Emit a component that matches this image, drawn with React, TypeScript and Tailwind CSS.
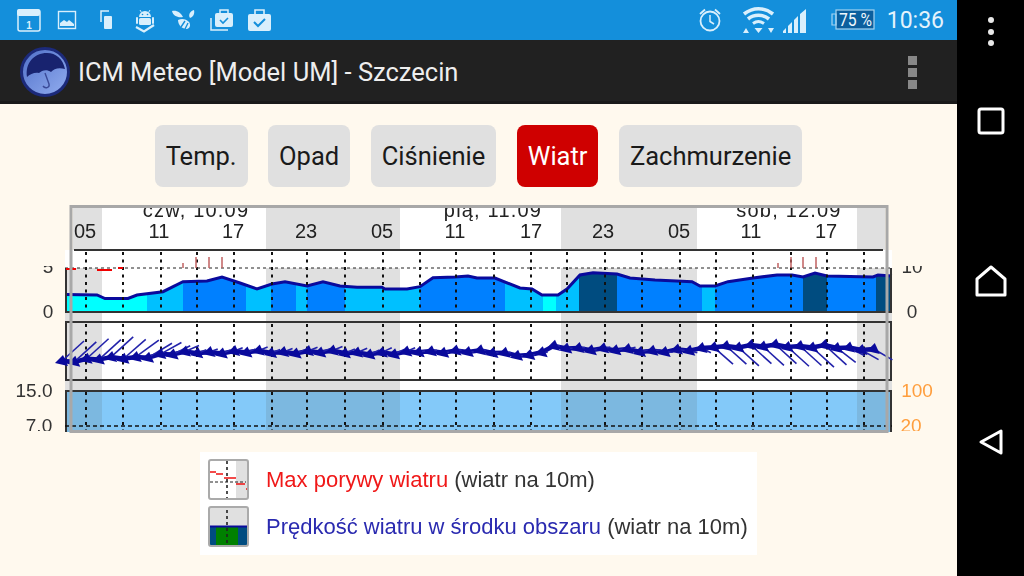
import React from 'react';

const tabs = [
  { label: 'Temp.' },
  { label: 'Opad' },
  { label: 'Ciśnienie' },
  { label: 'Wiatr', active: true },
  { label: 'Zachmurzenie' },
];

// chart values below are in page pixels (the svg viewBox starts at y=205)
const nightBands = [
  [65, 102],
  [266, 400],
  [561, 697],
  [857, 892],
];
const gridX = [86, 123, 161, 197, 234, 272, 307, 345, 383, 420, 456, 494, 531, 567, 605, 642, 680, 716, 753, 791, 827, 864];
const hours = [
  ['05', 85], ['11', 159], ['17', 233], ['23', 306], ['05', 382], ['11', 455],
  ['17', 531], ['23', 603], ['05', 679], ['11', 751], ['17', 826],
] as const;
const days = [
  ['czw, 10.09', 196],
  ['pią, 11.09', 493],
  ['sob, 12.09', 789],
] as const;

const curve = [
  [65, 294.5], [97, 295], [105, 298.5], [128, 298.5], [137, 295], [163, 291.7], [183, 281.7], [207, 281],
  [222, 277], [240, 283], [257, 289], [272, 284], [285, 281.7], [307, 286], [323, 281.7], [340, 286],
  [357, 287.3], [382, 287.3], [385, 289], [407, 289], [420, 286.7], [433, 277.7], [455, 277], [468, 276],
  [477, 278], [495, 278], [520, 288], [532, 289], [542, 295], [558, 295], [567, 289], [580, 275],
  [593, 272.7], [617, 274], [630, 278], [655, 280], [692, 281.7], [700, 286], [715, 286], [728, 281.7],
  [753, 278], [777, 275], [792, 275], [803, 277], [815, 273], [827, 276], [873, 277], [878, 275], [892, 276],
];
const curveLine = curve.map((p) => p.join(',')).join(' ');

const CYAN = '#00ffff';
const LIGHT = '#00c0ff';
const BLUE = '#0080ff';
const DARK = '#004c80';
const speedBands: [number, number, string][] = [
  [65, 147, CYAN], [147, 183, LIGHT], [183, 246, BLUE], [246, 271, LIGHT], [271, 296, BLUE], [296, 307, LIGHT],
  [307, 345, BLUE], [345, 420, LIGHT], [420, 505, BLUE], [505, 543, LIGHT], [543, 556, CYAN], [556, 579, LIGHT],
  [579, 617, DARK], [617, 702, BLUE], [702, 715, LIGHT], [715, 803, BLUE], [803, 827, DARK], [827, 876, BLUE],
  [876, 892, DARK],
];

const lerp = (table: number[][], x: number, col: number) => {
  for (let i = 1; i < table.length; i++) {
    if (x <= table[i][0]) {
      const t = (x - table[i - 1][0]) / (table[i][0] - table[i - 1][0]);
      return table[i - 1][col] + (table[i][col] - table[i - 1][col]) * t;
    }
  }
  return table[table.length - 1][col];
};

// x, y of the arrow head, then the tail offset
const windTable = [
  [62, 361, 22, -20],
  [120, 358, 22, -20],
  [150, 356, 24, -14],
  [185, 353, 14, -6],
  [200, 352, 8, -3],
  [340, 352, 10, -4],
  [400, 354, 10, -5],
  [420, 351, 6, -1],
  [500, 352, 6, 0],
  [530, 356, 6, 0],
  [555, 347, 6, 0],
  [640, 351, 8, -2],
  [700, 350, 8, 3],
  [715, 346, 20, 18],
  [830, 346, 22, 20],
  [845, 349, 15, 8],
  [885, 349, 20, 12],
];
const windArrows = Array.from({ length: 67 }, (_, i) => {
  const x = 62 + i * 12.3;
  const wob = [0, 1.5, -1, 0.5, -1.5, 1][i % 6];
  return {
    x,
    y: lerp(windTable, x, 1) + wob,
    dx: lerp(windTable, x, 2),
    dy: lerp(windTable, x, 3),
  };
});

const gustTicks = [183, 196, 209, 222, 778, 791, 803, 816];

function Chart() {
  return (
    <svg viewBox="0 205 957 228" width={957} height={228} className="block blur-[0.4px]">
      <defs>
        <clipPath id="under-curve">
          <polygon points={`65,311 ${curveLine} 892,311`} />
        </clipPath>
        <clipPath id="day-labels">
          <rect x={70} y={207} width={818} height={40} />
        </clipPath>
      </defs>

      {/* page background of the plot */}
      <rect x={73} y={208} width={812} height={42} fill="#fff" />
      <rect x={65} y={250} width={827} height={182} fill="#fff" />
      {nightBands.map(([a, b]) => (
        <g key={a} fill="#e0e0e0">
          <rect x={Math.max(a, 73)} y={208} width={Math.min(b, 885) - Math.max(a, 73)} height={42} />
          <rect x={a} y={268} width={b - a} height={122} />
        </g>
      ))}

      {/* speed area */}
      <g clipPath="url(#under-curve)">
        {speedBands.map(([a, b, c]) => (
          <rect key={a} x={a} y={268} width={b - a} height={44} fill={c} />
        ))}
      </g>
      <polyline points={curveLine} fill="none" stroke="#0a0a9c" strokeWidth={3} />

      {/* cloud strip */}
      <rect x={65} y={390} width={827} height={42} fill="#83c9f9" />
      {nightBands.map(([a, b]) => (
        <rect key={a} x={a} y={390} width={b - a} height={42} fill="#7cb8e0" />
      ))}

      {/* panel frames */}
      <g fill="none" stroke="#333" strokeWidth={2}>
        <path d="M74 250H883" />
        <path d="M66 268V312H891V268" />
        <rect x={66} y={322} width={825} height={58} />
        <path d="M66 432V391H891V432" />
      </g>

      {/* grid */}
      <g stroke="#111" strokeWidth={2} strokeDasharray="3 4.500">
        {gridX.map((x) => (
          <g key={x}>
            <path d={`M${x} 252V312`} />
            <path d={`M${x} 324V380`} />
            <path d={`M${x} 392V432`} />
          </g>
        ))}
      </g>
      <path d="M65 268H892" stroke="#222" strokeWidth={1} strokeDasharray="3 3" />
      <path d="M65 426H892" stroke="#111" strokeWidth={1.5} strokeDasharray="4 3" />

      {/* gusts */}
      <path d="M66 269H76M97 270H112M118 268H123" stroke="#f00000" strokeWidth={2} fill="none" />
      <g stroke="#c06060" strokeWidth={1.5} fill="none">
        {gustTicks.map((x, i) => (
          <path key={x} d={`M${x} 268V${i % 4 === 0 ? 263 : 257}`} />
        ))}
      </g>
      <path d="M232 431H300M340 431H885" stroke="#d06060" strokeWidth={1} strokeDasharray="6 6" />

      {/* wind */}
      <polyline
        points={windArrows.map((a) => `${a.x},${a.y}`).join(' ')}
        fill="none"
        stroke="#0a0a9c"
        strokeWidth={4.5}
      />
      {windArrows.map((a) => (
        <g key={a.x}>
          <path d={`M${a.x} ${a.y}l${a.dx} ${a.dy}`} stroke="#2222aa" strokeWidth={1.6} />
          <polygon
            points={`${a.x - 7},${a.y + 2} ${a.x + 1},${a.y - 6} ${a.x + 6},${a.y + 5}`}
            fill="#0a0a9c"
          />
        </g>
      ))}

      {/* axis text */}
      <g className="[font-family:'Liberation_Sans',sans-serif]" fontSize={20} fill="#222">
        <g clipPath="url(#day-labels)">
          {days.map(([t, x]) => (
            <text key={t} x={x} y={217} textAnchor="middle" letterSpacing={1.2}>
              {t}
            </text>
          ))}
        </g>
        {hours.map(([t, x]) => (
          <text key={x} x={x} y={238} textAnchor="middle">
            {t}
          </text>
        ))}
      </g>
      <g className="[font-family:'Liberation_Sans',sans-serif]" fontSize={19}>
        <g fill="#333">
          <text x={48} y={318} textAnchor="middle">0</text>
          <text x={912} y={318} textAnchor="middle">0</text>
          <text x={34} y={397} textAnchor="middle">15.0</text>
        </g>
        <g fill="#ff9e3d">
          <text x={917} y={397} textAnchor="middle">100</text>
        </g>
      </g>
      <svg x={0} y={266} width={957} height={9} viewBox="0 266 957 9" overflow="hidden">
        <g className="[font-family:'Liberation_Sans',sans-serif]" fontSize={19} fill="#333">
          <text x={48} y={273} textAnchor="middle">5</text>
          <text x={912} y={273} textAnchor="middle">10</text>
        </g>
      </svg>
      <svg x={0} y={416} width={957} height={15} viewBox="0 416 957 15" overflow="hidden">
        <g className="[font-family:'Liberation_Sans',sans-serif]" fontSize={19}>
          <text x={39} y={432} textAnchor="middle" fill="#333">7.0</text>
          <text x={911} y={432} textAnchor="middle" fill="#ff9e3d">20</text>
        </g>
      </svg>

      {/* scroll view frame drawn over the image */}
      <rect x={71} y={206.5} width={816} height={225} fill="none" stroke="#a8a8a8" strokeWidth={3} />
    </svg>
  );
}

function GustIcon() {
  return (
    <svg viewBox="0 0 41 41" width={41} height={41}>
      <rect x={1} y={1} width={39} height={39} rx={2} fill="#fff" />
      <rect x={28} y={1} width={12} height={39} fill="#e0e0e0" />
      <path d="M19 2V40" stroke="#222" strokeWidth={1.6} strokeDasharray="3 3" />
      <path d="M2 23H38" stroke="#222" strokeWidth={1} strokeDasharray="3 2" />
      <path d="M2 13H8M8 15H15M16 19H28M28 25H37M38 30H40" stroke="#f01010" strokeWidth={1.6} fill="none" />
      <rect x={1} y={1} width={39} height={39} rx={2} fill="none" stroke="#aaa" strokeWidth={2} />
    </svg>
  );
}

function SpeedIcon() {
  return (
    <svg viewBox="0 0 41 41" width={41} height={41}>
      <rect x={1} y={1} width={39} height={39} rx={2} fill="#e0e0e0" />
      <rect x={1} y={21} width={39} height={19} fill="#004c80" />
      <rect x={8} y={21} width={22} height={19} fill="#008000" />
      <path d="M1 20.5H40" stroke="#0a0a9c" strokeWidth={2} />
      <path d="M19 4V40" stroke="#222" strokeWidth={1.6} strokeDasharray="3 3" />
      <rect x={1} y={1} width={39} height={39} rx={2} fill="none" stroke="#aaa" strokeWidth={2} />
    </svg>
  );
}

const ICON = '#d9effc';
const BAR = '#148fdb';

function LeftStatusIcons() {
  return (
    <svg viewBox="0 0 290 40" width={290} height={40} className="shrink-0">
      {/* calendar */}
      <rect x={18} y={10} width={22} height={21} rx={2} fill="none" stroke={ICON} strokeWidth={1.5} />
      <rect x={17} y={9} width={23} height={7} rx={2} fill={ICON} />
      <text x={29} y={29} textAnchor="middle" fontSize={10} fontWeight={700} fill={ICON} className="[font-family:'Liberation_Sans',sans-serif]">1</text>
      {/* image */}
      <rect x={58.5} y={11.5} width={17} height={17} fill="none" stroke={ICON} strokeWidth={1.4} />
      <path d="M60 26v-3l4-3 3 2 2-2 5 4v2z" fill={ICON} />
      {/* device */}
      <path d="M109 11H101V22" fill="none" stroke={ICON} strokeWidth={1.5} />
      <rect x={104} y={16} width={8} height={13} rx={1} fill={ICON} />
      {/* android */}
      <path d="M140 10l1.500 2.500M150 10l-1.500 2.500" stroke={ICON} strokeWidth={1} />
      <path d="M139 17a6 6 0 0 1 12 0z" fill={ICON} />
      <circle cx={142.500} cy={14.500} r={0.8} fill={BAR} />
      <circle cx={147.500} cy={14.500} r={0.8} fill={BAR} />
      <rect x={139} y={18} width={12} height={7} rx={1.5} fill={ICON} />
      <path d="M137 18v5M153 18v5" stroke={ICON} strokeWidth={2} strokeLinecap="round" />
      <path d="M136 27l8 4.500 10-6.500" fill="none" stroke={ICON} strokeWidth={2.2} />
      {/* swarm bee */}
      <path d="M172 11c5-1 9 2 11 6-5 1-10-1-11-6zM194 10c1 4-1 7-4 8-2-3 0-7 4-8z" fill={ICON} />
      <path d="M178 20c4-2 8-1 11 2 2 3 1 6-2 7-5 0-9-4-9-9z" fill={ICON} />
      <path d="M181 27l4-6M185 29l3-6" stroke={BAR} strokeWidth={1.4} />
      {/* briefcase check, stacked */}
      <path d="M211 18V30H228" fill="none" stroke={ICON} strokeWidth={1.5} />
      <rect x={215} y={13} width={18} height={14} rx={2} fill={ICON} />
      <path d="M220 13v-3h8v3" fill="none" stroke={ICON} strokeWidth={1.5} />
      <path d="M220 20l3 3 5-5" fill="none" stroke={BAR} strokeWidth={1.6} />
      {/* briefcase check */}
      <rect x={248} y={14} width={23} height={17} rx={2} fill={ICON} />
      <path d="M255 14v-4h9v4" fill="none" stroke={ICON} strokeWidth={1.6} />
      <path d="M254 22l4 4 7-7" fill="none" stroke={BAR} strokeWidth={2} />
    </svg>
  );
}

function RightStatusIcons() {
  return (
    <svg viewBox="0 0 180 40" width={180} height={40} className="shrink-0">
      {/* alarm */}
      <circle cx={15} cy={21} r={9.5} fill="none" stroke={ICON} strokeWidth={1.8} />
      <path d="M15 15v6.500l4 2.500" fill="none" stroke={ICON} strokeWidth={1.5} />
      <path d="M5 14l5-4.500M25 14l-5-4.500" stroke={ICON} strokeWidth={1.8} />
      {/* wifi */}
      <path d="M49 14c9-7 20-7 29 0" fill="none" stroke={ICON} strokeWidth={3.6} />
      <path d="M53 19c6-5 15-5 21 0" fill="none" stroke={ICON} strokeWidth={3.6} />
      <path d="M58 23.500c3.500-2.500 7.500-2.500 11 0" fill="none" stroke={ICON} strokeWidth={3} />
      <path d="M48 33l3-5 3 5zM59.500 28h8l-4 5zM73 28h6l-3 5z" fill={ICON} />
      {/* signal */}
      <path d="M88 33v-2l3-3v5zM93 33v-7l4-4v11zM99 33V20l4-4v17zM105 33V14l6-5v24z" fill={ICON} />
      {/* battery */}
      <rect x={141} y={10} width={38} height={19} fill="#0b5f9e" stroke="#a5d4f1" strokeWidth={1.2} />
      <path d="M141 14h-4v11h4z" fill="none" stroke="#a5d4f1" strokeWidth={1.2} />
      <text x={144} y={26} fontSize={18} fill="#f0f8fd" textLength={33} lengthAdjust="spacingAndGlyphs" className="[font-family:Roboto,sans-serif]">
        75 %
      </text>
    </svg>
  );
}

function Logo() {
  return (
    <svg viewBox="0 0 50 50" width={50} height={50} className="shrink-0">
      <defs>
        <linearGradient id="logo-fill" x1="0" y1="0" x2="1" y2="1">
          <stop offset="0" stopColor="#4f6fc8" />
          <stop offset="1" stopColor="#93aef0" />
        </linearGradient>
      </defs>
      <circle cx={25} cy={25} r={23.500} fill="url(#logo-fill)" stroke="#1c2a7a" strokeWidth={3} />
      <path d="M7 30C5 16 14 6 27 6c9 0 16 6 18 16-7-2-11 0-14 3-4-3-9-2-12 1-4-1-9 1-12 4z" fill="#18236f" />
      <path d="M25 26l4 11c1 4-4 5-6 2" fill="none" stroke="#3a4a98" strokeWidth={1.4} />
    </svg>
  );
}

export default function App() {
  return (
    <div className="flex h-[576px] w-[1024px] overflow-hidden [font-family:Roboto,sans-serif]">
      <div className="flex w-[957px] flex-col bg-[#fff9ee]">
        {/* status bar */}
        <div className="flex h-10 items-center justify-between bg-[#148fdb]">
          <LeftStatusIcons />
          <div className="flex items-center">
            <div className="mr-[13px] flex items-center">
              <RightStatusIcons />
            </div>
            <span className="mr-[13px] -ml-[1px] text-[23px] leading-none text-[#e4f3fc]">10:36</span>
          </div>
        </div>

        {/* action bar */}
        <div className="flex h-16 items-center justify-between border-b-[3px] border-[#1a1a1a] bg-[#212121] pl-5 pr-10 pt-[2px]">
          <div className="flex items-center gap-2">
            <Logo />
            <span className="mt-[3px] text-[25.5px] leading-none text-[#eeeeee]">ICM Meteo [Model UM] - Szczecin</span>
          </div>
          <div className="mt-[1px] flex flex-col gap-[3px]">
            <div className="size-[9px] bg-[#888888]" />
            <div className="size-[9px] bg-[#888888]" />
            <div className="size-[9px] bg-[#888888]" />
          </div>
        </div>

        {/* tabs */}
        <div className="mt-[21px] flex justify-center gap-[20.5px]">
          {tabs.map((tab) => (
            <div
              key={tab.label}
              className={
                tab.active
                  ? 'flex h-[62px] items-center rounded-lg bg-[#cf0000] px-[11px] text-[25.5px] text-white'
                  : 'flex h-[62px] items-center rounded-lg bg-[#e0e0e0] px-[11px] text-[25.5px] text-[#1a1a1a]'
              }
            >
              {tab.label}
            </div>
          ))}
        </div>

        <div className="mt-[18px]">
          <Chart />
        </div>

        {/* legend */}
        <div className="mx-auto mt-[19px] flex h-[103px] w-[557px] flex-col gap-[6px] bg-white pl-2 pt-[7px] text-[22px] leading-none text-[#333333] blur-[0.4px] [font-family:'Liberation_Sans',sans-serif]">
          <div className="flex items-center gap-[17px]">
            <GustIcon />
            <p className="whitespace-nowrap">
              <span className="text-[#f01818]">Max porywy wiatru</span> (wiatr na 10m)
            </p>
          </div>
          <div className="flex items-center gap-[17px]">
            <SpeedIcon />
            <p className="whitespace-nowrap">
              <span className="text-[#2a2ab0]">Prędkość wiatru w środku obszaru</span> (wiatr na 10m)
            </p>
          </div>
        </div>
      </div>

      {/* navigation bar */}
      <div className="flex w-[67px] flex-col items-center bg-black">
        <div className="mt-[17px] flex flex-col gap-[5.5px]">
          <div className="size-[6px] rounded-full bg-[#e8e8e8]" />
          <div className="size-[6px] rounded-full bg-[#e8e8e8]" />
          <div className="size-[6px] rounded-full bg-[#e8e8e8]" />
        </div>
        <svg width={28} height={28} viewBox="0 0 28 28" className="mt-[61px]">
          <rect x={2} y={2} width={24} height={24} rx={2} fill="none" stroke="#fff" strokeWidth={3} />
        </svg>
        <svg width={32} height={32} viewBox="0 0 32 32" className="mt-[130px]">
          <path d="M2 30V14L16 2l14 12v16z" fill="none" stroke="#fff" strokeWidth={3} strokeLinejoin="round" />
        </svg>
        <svg width={26} height={28} viewBox="0 0 26 28" className="mt-[131px]">
          <path d="M23 3v22L3 14z" fill="none" stroke="#fff" strokeWidth={3} strokeLinejoin="round" />
        </svg>
      </div>
    </div>
  );
}
